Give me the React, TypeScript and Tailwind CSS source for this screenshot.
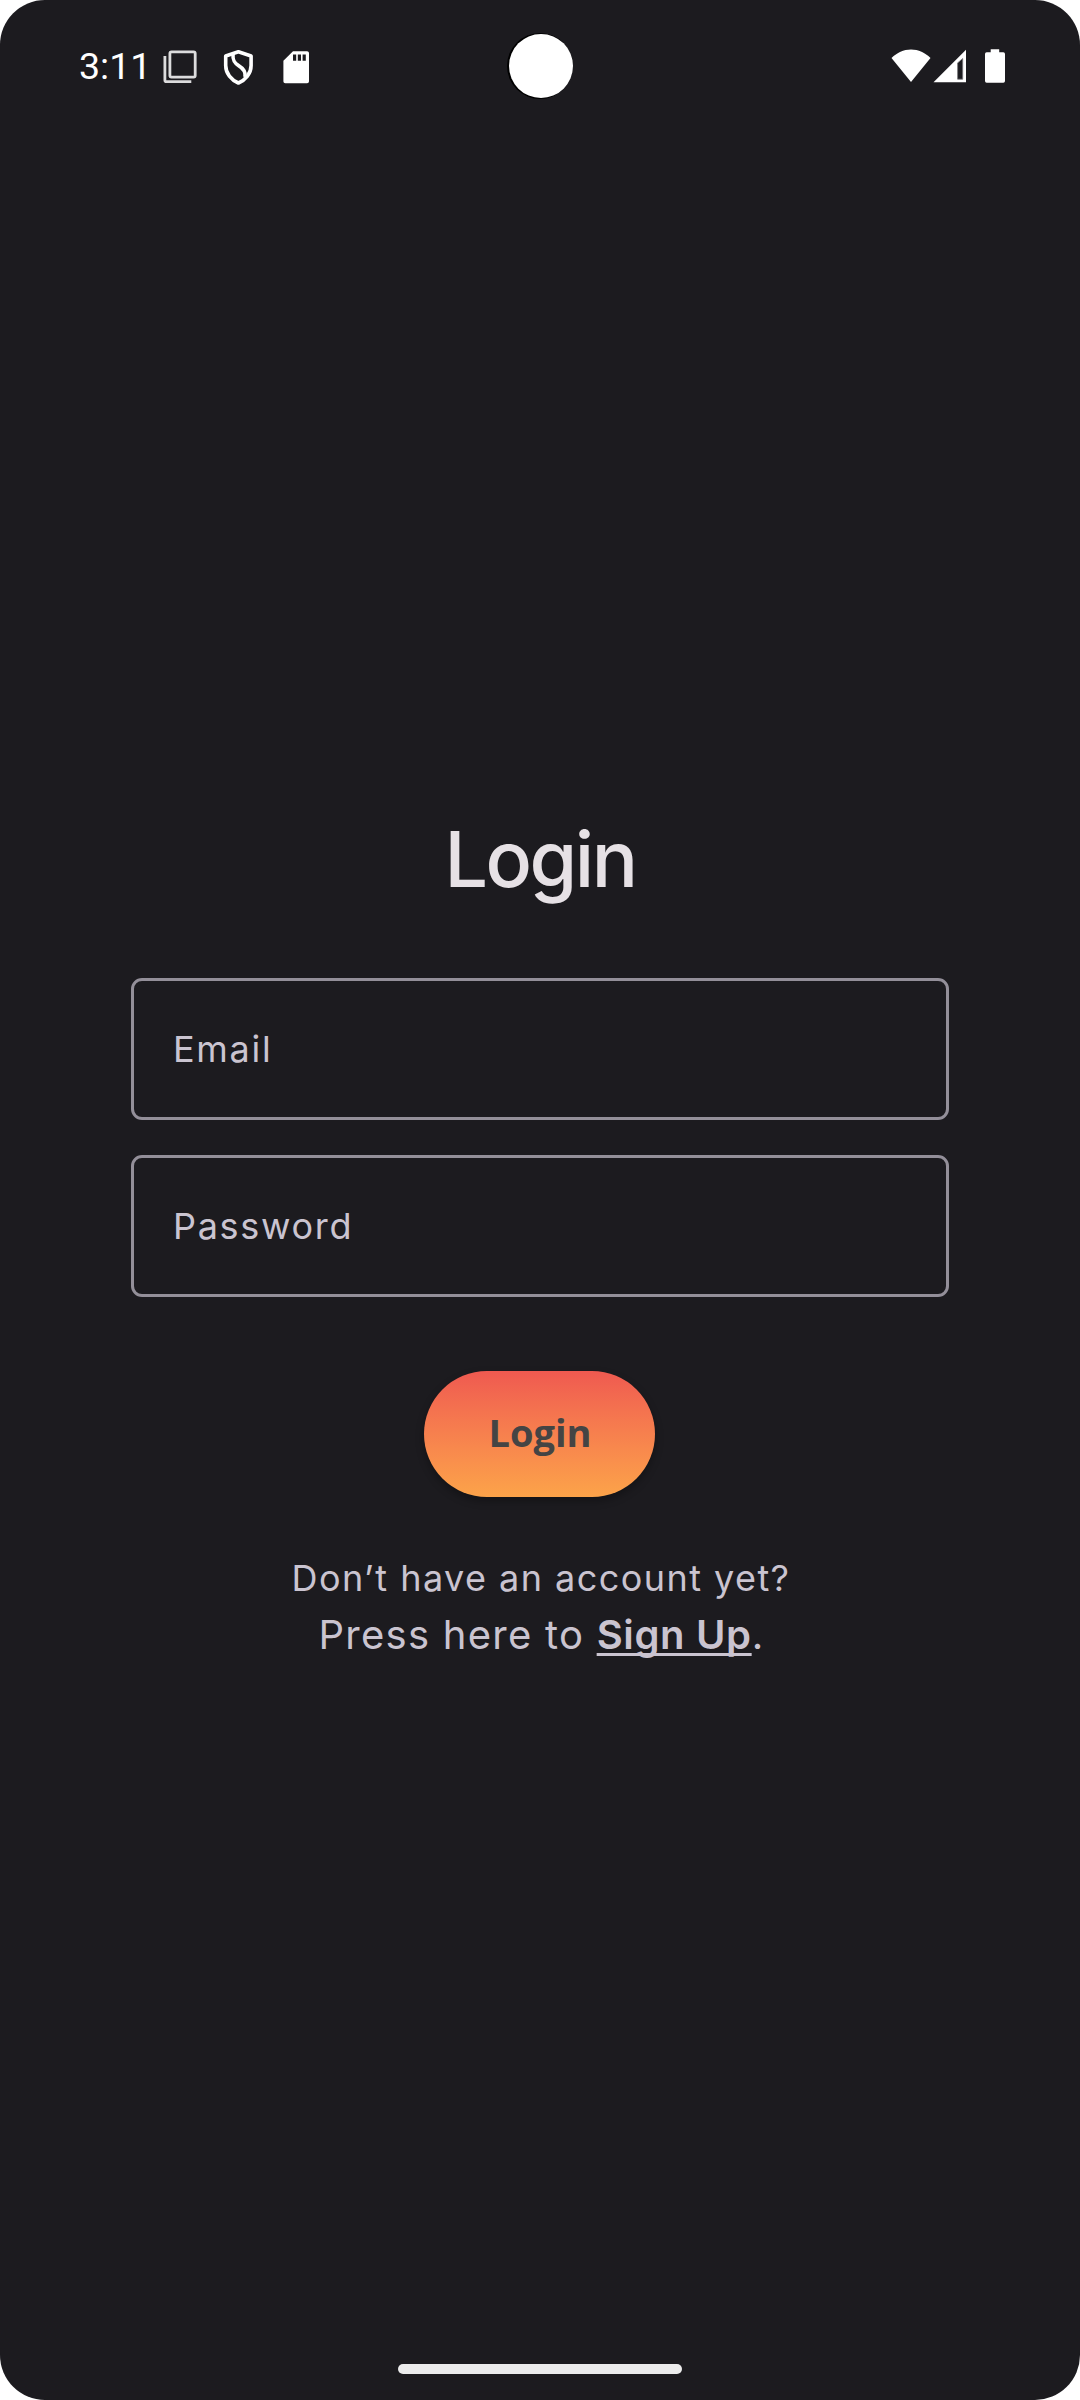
import React from "react";

function WindowsIcon() {
  return (
    <svg width="36" height="36" viewBox="162 49 36 36" fill="none" stroke="#dcdcdd" strokeWidth="2.8">
      <rect x="169.9" y="51.9" width="25.3" height="25.3" rx="1.6" />
      <path d="M164.9 56v24.2q0 1.4 1.4 1.4H191.3" />
    </svg>
  );
}

function ShieldIcon() {
  return (
    <svg width="36" height="38" viewBox="221 48 36 38" fill="none" stroke="#fff" strokeWidth="3.6" strokeLinejoin="round">
      <path d="M238.4 51.7 L251.1 56 V65.5 C251.1 73.5 245.5 80 238.4 83 C231.3 80 225.7 73.5 225.7 65.5 V56 Z" />
      <path d="M233 54.2 C232.6 60 234 62.8 238.6 65.6 C243.6 68.6 246 71.5 245 77" />
    </svg>
  );
}

function SdCardIcon() {
  return (
    <svg width="38.4" height="38.4" viewBox="0 0 24 24" fill="#fff">
      <path d="M18.8 2H10L4 8V20.8c0 .7.5 1.2 1.2 1.2h13.6c.7 0 1.2-.5 1.2-1.2V3.2c0-.7-.5-1.2-1.2-1.2zM12 8h-2V4h2v4zm3 0h-2V4h2v4zm3 0h-2V4h2v4z" />
    </svg>
  );
}

function WifiIcon() {
  return (
    <svg width="40" height="34" viewBox="890.5 48.5 40 34" fill="#fff">
      <path d="M910.5 81.6 L891 57.6 C896.5 52.2 903 49.1 910.5 49.1 C918 49.1 924.5 52.2 930 57.6 Z" />
    </svg>
  );
}

function SignalIcon() {
  return (
    <svg width="34" height="34" viewBox="933 48.5 34 34">
      <path d="M933.5 81.7 L966 49.2 V81.7 Z" fill="#fff" />
      <path d="M957.6 78.7 V62.4 L962.7 58 V78.7 Z" fill="#1c1b1f" stroke="#77767a" strokeWidth="0.8" />
    </svg>
  );
}

function BatteryIcon() {
  return (
    <svg width="20" height="34" viewBox="985 49 20 34" fill="#fff">
      <path d="M990.7 49.2h8.5v3h4.1q1.7 0 1.7 1.7v27.1q0 1.7-1.7 1.7h-16.6q-1.7 0-1.7-1.7V53.9q0-1.7 1.7-1.7h4z" />
    </svg>
  );
}

function StatusBar() {
  return (
    <header className="relative flex h-[132px] items-start justify-between">
      <div className="flex items-start">
        <span className="ml-[79px] mt-[43px] h-[46px] w-[83px] font-['Roboto',sans-serif] text-[37.5px] leading-[46px] text-white">
          3:11
        </span>
        <span className="mt-[49px]"><WindowsIcon /></span>
        <span className="ml-[23px] mt-[48px]"><ShieldIcon /></span>
        <span className="ml-[19.6px] mt-[47.8px]"><SdCardIcon /></span>
      </div>
      <div className="absolute left-[507px] top-[33px] h-[66px] w-[66px] rounded-full bg-black">
        <div className="ml-[2px] mt-[1px] h-[64px] w-[64px] rounded-full bg-white" />
      </div>
      <div className="mr-[75px] flex items-start">
        <span className="mt-[48.5px]"><WifiIcon /></span>
        <span className="ml-[2.5px] mt-[48.5px]"><SignalIcon /></span>
        <span className="ml-[18px] mt-[49px]"><BatteryIcon /></span>
      </div>
    </header>
  );
}

function Field({ label, type }: { label: string; type: string }) {
  return (
    <input
      type={type === "password" ? "text" : type}
      placeholder={label}
      aria-label={label}
      className="block h-[142px] w-[818px] rounded-[11px] border-[3px] border-[#938f99] bg-transparent pl-[39px] font-['Inter',sans-serif] text-[36px] leading-[44px] tracking-[1.7px] text-[#cac4d0] outline-none placeholder:text-[#cac4d0]"
    />
  );
}

export default function App() {
  return (
    <div className="bg-white">
      <div className="flex h-[2400px] w-[1080px] flex-col overflow-hidden rounded-[45px] bg-[#1c1b1f] font-['Inter',sans-serif] text-[#cac4d0]">
        <StatusBar />
        <main className="flex flex-1 flex-col items-center">
          <h1 className="mt-[677px] h-[100px] text-[77px] font-[540] leading-[100px] tracking-[-2.5px] text-[#e6e1e5]">
            Login
          </h1>
          <form className="mt-[69px] flex flex-col items-center" onSubmit={(e) => e.preventDefault()}>
            <div className="flex flex-col gap-[35px]">
              <Field label="Email" type="email" />
              <Field label="Password" type="password" />
            </div>
            <button className="mr-px mt-[74px] h-[126px] w-[231px] rounded-full bg-linear-to-b from-[#ef5950] to-[#fca349] pb-[4px] pl-px font-['Open_Sans',sans-serif] text-[38px] font-bold leading-[54px] text-[#444] shadow-[0_4px_8px_rgba(0,0,0,0.3)]">
              Login
            </button>
          </form>
          <p className="mt-[54px] h-[54px] whitespace-nowrap pl-[2px] text-[36px] leading-[54px] tracking-[1.45px]">
            Don’t have an account yet?
          </p>
          <p className="mt-[2px] h-[56px] whitespace-nowrap pl-[3px] text-[40px] leading-[56px] tracking-[1.25px]">
            Press here to{" "}
            <a className="font-semibold tracking-[0.65px] underline decoration-[3px] underline-offset-[4px] [text-decoration-skip-ink:none]">
              Sign Up
            </a>
            .
          </p>
        </main>
        <footer className="flex h-[36px] justify-center">
          <div className="h-[10px] w-[284px] rounded-full bg-[#ececec]" />
        </footer>
      </div>
    </div>
  );
}
